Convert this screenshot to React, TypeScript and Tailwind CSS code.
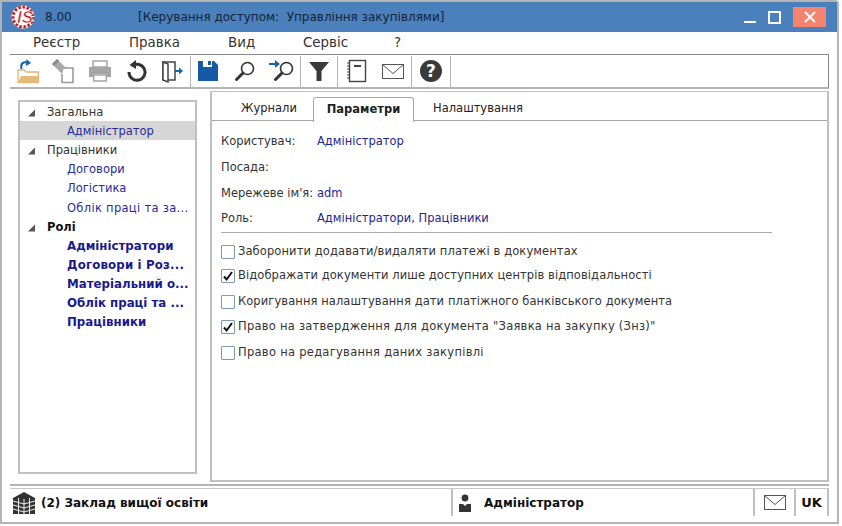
import React from "react";

const treeRows: { t: string; kind: "g" | "gb" | "c" | "cb"; sel?: boolean; extra?: string }[] = [
  { t: "Загальна", kind: "g" },
  { t: "Адміністратор", kind: "c", sel: true },
  { t: "Працівники", kind: "g" },
  { t: "Договори", kind: "c" },
  { t: "Логістика", kind: "c" },
  { t: "Облік праці та за...", kind: "c", extra: "tracking-[0.3px]" },
  { t: "Ролі", kind: "gb" },
  { t: "Адміністратори", kind: "cb" },
  { t: "Договори і Роз...", kind: "cb", extra: "tracking-[0.15px]" },
  { t: "Матеріальний о...", kind: "cb" },
  { t: "Облік праці та ...", kind: "cb" },
  { t: "Працівники", kind: "cb" },
];

function Tri() {
  return (
    <svg width="8" height="8" viewBox="0 0 8 8" className="absolute left-[8px] top-[7px]">
      <path d="M0 7.5 L7 7.5 L7 0.5 Z" fill="#555" />
    </svg>
  );
}

function Box({ on }: { on?: boolean }) {
  return (
    <span className="relative block w-[14px] h-[14px] shrink-0 border border-[#7d9ab5] bg-white rounded-[1px]">
      {on && (
        <svg width="12" height="12" viewBox="0 0 12 12" className="absolute left-0 top-0">
          <path d="M2 6.5 L4.6 9.5 L10 2" fill="none" stroke="#111" strokeWidth="2" />
        </svg>
      )}
    </span>
  );
}

function Sep() {
  return <div className="w-px h-[31px] bg-[#b5b5b5] shrink-0" />;
}

function Mail({ w = 22, h = 15 }: { w?: number; h?: number }) {
  return (
    <svg width={w} height={h} viewBox="0 0 22 15">
      <rect x="0.5" y="0.5" width="21" height="14" fill="none" stroke="#555" />
      <path d="M0.5 0.5 L11 9.5 L21.5 0.5" fill="none" stroke="#555" />
    </svg>
  );
}

function Ic({ w, children }: { w: number; children: React.ReactNode }) {
  return (
    <div className="h-full flex items-center justify-center shrink-0" style={{ width: w }}>
      {children}
    </div>
  );
}

const Loupe = () => (
  <svg width="22" height="22" viewBox="0 0 22 22">
    <circle cx="13.5" cy="8.5" r="6" fill="none" stroke="#333" strokeWidth="1.6" />
    <path d="M9 13 L2.5 19.5" stroke="#333" strokeWidth="3" strokeLinecap="round" />
  </svg>
);

const Row = ({ l, v, cls }: { l: string; v?: string; cls: string }) => (
  <div className={`flex items-center h-[20px] ${cls}`}>
    <span className="w-[96px] shrink-0 text-[#333] whitespace-nowrap">{l}</span>
    {v && <span className="text-[#24248f] whitespace-nowrap">{v}</span>}
  </div>
);

const Check = ({ t, on, cls, sp }: { t: string; on?: boolean; cls: string; sp: string }) => (
  <div className={`flex items-center h-[20px] ${cls}`}>
    <Box on={on} />
    <span className={`ml-[3px] text-[#333] whitespace-nowrap ${sp}`}>{t}</span>
  </div>
);

export default function App() {
  return (
    <div
      className="w-[842px] h-[526px] bg-white overflow-hidden text-[11.5px] leading-none"
      style={{ fontFamily: '"DejaVu Sans", Verdana, sans-serif' }}
    >
      <div className="w-[839px] h-[524px] flex flex-col border-t-2 border-x-2 border-b-2 border-[#b4b4b4] rounded-tr-[4px]">
        {/* title */}
        <div className="h-[30px] bg-[#4a80bb] flex items-center shrink-0 relative text-[#14233a] text-[12px]">
          <svg width="26" height="28" viewBox="0 0 26 28" className="ml-[9px] shrink-0">
            <circle cx="12" cy="14" r="11.5" fill="#fff" />
            <circle cx="12" cy="14" r="10" fill="none" stroke="#c4202c" strokeWidth="3" strokeDasharray="2.6 1.6" />
            <circle cx="13" cy="14" r="7" fill="#fff" />
            <text x="14" y="20" textAnchor="middle" fontSize="17" fontWeight="700" fontStyle="italic" fill="#c4202c" stroke="#fff" strokeWidth="0.6" fontFamily="Liberation Sans">IS</text>
          </svg>
          <span className="ml-[8px] w-[93px] shrink-0">8.00</span>
          <span className="whitespace-pre">[Керування доступом:  Управління закупівлями]</span>
          <div className="absolute right-[11px] top-[5px] h-[20px] flex items-center">
            <div className="w-[12px] h-[2px] bg-white mt-[10px] mr-[12px]" />
            <div className="w-[13px] h-[13px] border-2 border-white mr-[12px]" />
            <div className="w-[33px] h-[20px] bg-[#f4836f] flex items-center justify-center">
              <svg width="12" height="12" viewBox="0 0 12 12">
                <path d="M1 1 L11 11 M11 1 L1 11" stroke="#fff" strokeWidth="1.8" />
              </svg>
            </div>
          </div>
        </div>
        {/* menu */}
        <div className="h-[22px] flex items-center shrink-0 text-[#333] pl-[31px] text-[13.4px]">
          <span className="w-[96px]">Реєстр</span>
          <span className="w-[99px]">Правка</span>
          <span className="w-[75px]">Вид</span>
          <span className="w-[91px]">Сервіс</span>
          <span>?</span>
        </div>
        {/* toolbar */}
        <div className="h-[35px] mx-[8px] border-t border-[#888] border-r border-b-2 border-b-[#b4b4b4] flex items-center shrink-0 pl-[1px]">
          <Ic w={34}>
            <svg width="24" height="26" viewBox="0 0 24 26">
              <path d="M2 12 H8 L10 14 H22.5 V24.5 H2 Z" fill="#fff" stroke="#dcb67a" strokeWidth="1.3" />
              <path d="M2 24.5 L5 18 H23 V24.5 Z" fill="#e3bb78" />
              <path d="M5.5 11 C4 5 8 3.5 11 4.5" fill="none" stroke="#1a63ad" strokeWidth="2" />
              <path d="M10.5 1 L15 5 L10 8 Z" fill="#1a63ad" />
            </svg>
          </Ic>
          <Ic w={36}>
            <svg width="26" height="26" viewBox="0 0 26 26">
              <path d="M2 6 L7 1 L18 12 L13 17 Z" fill="#a8a8a8" />
              <path d="M14 10 H23 V24.5 H12 V16" fill="#fff" stroke="#9a9a9a" strokeWidth="1.6" />
              <path d="M2 6 L7 1 L9 3 L4 8 Z" fill="#8c8c8c" />
            </svg>
          </Ic>
          <Ic w={37}>
            <svg width="26" height="24" viewBox="0 0 26 24">
              <rect x="6" y="2" width="14" height="6" fill="#fff" stroke="#a5a5a5" strokeWidth="1.5" />
              <path d="M2 8 H24 V18 H20 V15 H6 V18 H2 Z" fill="#a5a5a5" />
              <rect x="6.7" y="16" width="12.6" height="6" fill="#fff" stroke="#a5a5a5" strokeWidth="1.5" />
            </svg>
          </Ic>
          <Ic w={36}>
            <svg width="22" height="24" viewBox="0 0 22 24">
              <path d="M7 7 A8 8 0 1 1 4 13" fill="none" stroke="#333" strokeWidth="3" />
              <path d="M11 1 V10 L4.5 6 Z" fill="#333" />
            </svg>
          </Ic>
          <Ic w={36}>
            <svg width="24" height="24" viewBox="0 0 24 24">
              <path d="M3 3 H15 V21 H3 Z" fill="none" stroke="#444" strokeWidth="1.5" />
              <path d="M3 3 L8 5 V23 L3 21 Z" fill="#fff" stroke="#444" strokeWidth="1.5" />
              <path d="M15 12 H20" stroke="#1a63ad" strokeWidth="2" />
              <path d="M19 8.5 L23 12 L19 15.5 Z" fill="#1a63ad" />
            </svg>
          </Ic>
          <Sep />
          <Ic w={34}>
            <svg width="22" height="22" viewBox="0 0 22 22">
              <path d="M1 1 H6 V7 H15 V1 H17 L21 5 V21 H1 Z" fill="#1659a5" />
              <rect x="11" y="1" width="3" height="4" fill="#1659a5" />
            </svg>
          </Ic>
          <Ic w={39}><Loupe /></Ic>
          <Ic w={36}>
            <div className="relative w-[26px] h-[24px]">
              <div className="absolute left-[4px] top-[1px]"><Loupe /></div>
              <svg width="13" height="11" viewBox="0 0 13 11" className="absolute left-0 top-0">
                <path d="M0 5 H7" stroke="#1a63ad" strokeWidth="2" />
                <path d="M6 1 L11 5 L6 9 Z" fill="#1a63ad" />
              </svg>
            </div>
          </Ic>
          <Sep />
          <Ic w={36}>
            <svg width="22" height="22" viewBox="0 0 22 22">
              <path d="M1 2 H21 L13.5 11 V21 H8.5 V11 Z" fill="#3a3a3a" />
            </svg>
          </Ic>
          <Sep />
          <Ic w={37}>
            <svg width="22" height="24" viewBox="0 0 22 24">
              <rect x="3.5" y="1.5" width="16" height="21" fill="#fff" stroke="#444" strokeWidth="1.4" />
              <path d="M1 4 H4 M1 7 H4 M1 10 H4 M1 13 H4 M1 16 H4 M1 19 H4" stroke="#444" />
              <rect x="8" y="6" width="7" height="2" fill="#444" />
            </svg>
          </Ic>
          <Ic w={36}><Mail /></Ic>
          <Sep />
          <Ic w={38}>
            <svg width="22" height="22" viewBox="0 0 22 22">
              <circle cx="11" cy="11" r="11" fill="#3a3a3a" />
              <text x="11" y="17" textAnchor="middle" fontSize="17" fontWeight="700" fill="#fff" fontFamily="DejaVu Sans">?</text>
            </svg>
          </Ic>
          <Sep />
        </div>
        {/* body */}
        <div className="flex-1 flex min-h-0 mx-[8px]">
          <div className="w-[179px] mt-[11px] mb-[10px] ml-[8px] border-2 border-[#c0c0c0] shrink-0">
            {treeRows.map((r, i) => (
              <div
                key={i}
                className={`relative h-[19.15px] pt-[2px] flex items-center whitespace-nowrap ${r.extra ?? ""} ${r.sel ? "bg-[#d6d6d6]" : ""} ${
                  r.kind === "g" ? "pl-[27px] text-[#333]" : r.kind === "gb" ? "pl-[27px] font-bold text-[#111]" : r.kind === "c" ? "pl-[47px] text-[#2a2a9a]" : "pl-[47px] font-bold text-[11.8px] text-[#1a1a8c]"
                }`}
              >
                {(r.kind === "g" || r.kind === "gb") && <Tri />}
                {r.t}
              </div>
            ))}
          </div>
          <div className="flex-1 mt-[2px] ml-[13px] mb-[2px] border-l-2 border-t border-r-2 border-b-2 border-[#c0c0c0] flex flex-col pl-[9px] min-w-0 relative">
            <div className="absolute left-0 right-0 top-[28px] h-px bg-[#a8a8a8]" />
            <div className="h-[29px] -ml-[9px] flex items-end shrink-0 relative">
              <div className="w-[101px] h-[25px] flex items-center justify-center text-[#222] pl-[13px]">Журнали</div>
              <div className="w-[101px] h-[25px] border border-b-0 border-[#a8a8a8] rounded-t-[3px] bg-white flex items-center justify-center font-bold text-[#222] z-10 relative top-px">Параметри</div>
              <div className="w-[110px] h-[25px] flex items-center justify-center text-[#222] pl-[18px]">Налаштування</div>
            </div>
            <Row l="Користувач:" v="Адміністратор" cls="mt-[11px]" />
            <Row l="Посада:" cls="mt-[6px]" />
            <Row l="Мережеве ім'я:" v="adm" cls="mt-[6px]" />
            <Row l="Роль:" v="Адміністратори, Працівники" cls="mt-[5px]" />
            <div className="h-px bg-[#aaa] w-[551px] mt-[3px]" />
            <Check sp="tracking-[0.1px]" t="Заборонити додавати/видаляти платежі в документах" cls="mt-[9px]" />
            <Check sp="tracking-[0.08px]" on t="Відображати документи лише доступних центрів відповідальності" cls="mt-[4px]" />
            <Check sp="tracking-[0.08px]" t="Коригування налаштування дати платіжного банківського документа" cls="mt-[6px]" />
            <Check sp="tracking-[0.25px]" on t={'Право на затвердження для документа "Заявка на закупку (Знз)"'} cls="mt-[5px]" />
            <Check sp="tracking-[0.28px]" t="Право на редагування даних закупівлі" cls="mt-[6px]" />
          </div>
        </div>
        {/* status */}
        <div className="h-[38px] mx-[8px] border-t-2 border-[#b4b4b4] pt-[2px] shrink-0">
          <div className="h-[28px] border-t border-[#c8c8c8] flex items-center font-bold text-[#111] text-[12px]">
            <div className="flex-1 flex items-center min-w-0">
              <svg width="24" height="24" viewBox="0 0 24 24" className="ml-[2px] shrink-0">
                <path d="M12 1 L23 7 V23 H1 V7 Z" fill="#333" />
                <path d="M1 10 L12 13 L23 10 M1 14 L12 17 L23 14 M1 18 L12 21 L23 18 M12 8 V23 M6.5 7 V23 M17.5 7 V23" fill="none" stroke="#fff" strokeWidth="0.9" />
              </svg>
              <span className="ml-[5px] whitespace-nowrap">(2) Заклад вищої освіти</span>
            </div>
            <div className="w-[302px] h-full border-l-2 border-[#c0c0c0] flex items-center shrink-0">
              <svg width="14" height="18" viewBox="0 0 14 18" className="ml-[5px] shrink-0">
                <circle cx="7" cy="4" r="3.4" fill="#333" />
                <path d="M1 10 H5 L7 12 L9 10 H13 V18 H1 Z" fill="#333" />
              </svg>
              <span className="ml-[12px]">Адміністратор</span>
            </div>
            <div className="w-[43px] h-full border-x-2 border-[#c0c0c0] flex items-center justify-center shrink-0"><Mail /></div>
            <div className="w-[33px] h-full border-r-2 border-[#c0c0c0] flex items-center justify-center shrink-0 text-[13px]">UK</div>
          </div>
        </div>
      </div>
    </div>
  );
}
